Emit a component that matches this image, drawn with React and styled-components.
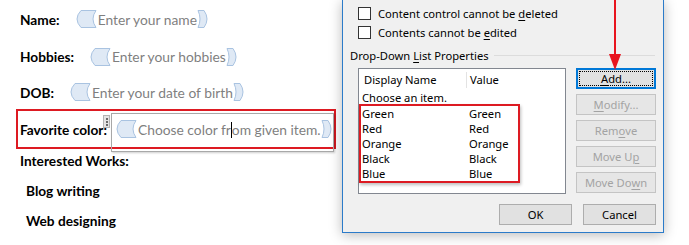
import React from 'react'
import styled, { createGlobalStyle } from 'styled-components'

const GlobalStyle = createGlobalStyle`
  html, body { margin: 0; padding: 0; background: #fff; }
  body { width: 689px; height: 245px; overflow: hidden; }
`

const fields = [
    { label: 'Name:', text: 'Enter your name', h: 38 },
    { label: 'Hobbies:', text: 'Enter your hobbies', h: 37 },
    { label: 'DOB:', text: 'Enter your date of birth', h: 34 },
]

const colorsList = ['Green', 'Red', 'Orange', 'Black', 'Blue']

const sideButtons = [
    { pre: '', u: 'A', post: 'dd...', active: true },
    { pre: '', u: 'M', post: 'odify...' },
    { pre: 'Rem', u: 'o', post: 've' },
    { pre: 'Move U', u: 'p', post: '' },
    { pre: 'Move Do', u: 'w', post: 'n' },
]

const StartTab = () => (
    <svg width="22" height="18" viewBox="0 0 22 18">
        <path d="M6 0.5 H21 Q15 9 21 17.5 H6 Q-2 9 6 0.5 Z" fill="#dfe9f5" stroke="#a9c3e1" />
    </svg>
)

const EndTab = () => (
    <svg width="13" height="18" viewBox="0 0 13 18">
        <path d="M1 0.5 H7 Q13 9 7 17.5 H1 Q5 9 1 0.5 Z" fill="#dfe9f5" stroke="#a9c3e1" />
    </svg>
)

const Placeholder = ({ children }) => (
    <Control>
        <StartTab />
        <PlaceText>{children}</PlaceText>
        <EndTab />
    </Control>
)

const App = () => {
    return (
        <Page>
            <GlobalStyle />
            <DocPane>
                {fields.map((f, i) => (
                    <FieldRow key={i} $h={f.h}>
                        <Label>{f.label}</Label>
                        <Placeholder>{f.text}</Placeholder>
                    </FieldRow>
                ))}
                <FavRow>
                    <Label>Favorite color:</Label>
                    <ControlBox>
                        <Grip><i /><i /><i /></Grip>
                        <Control>
                            <StartTab />
                            <PlaceText>Choose color fr<Caret />om given item.</PlaceText>
                            <EndTab />
                        </Control>
                    </ControlBox>
                </FavRow>
                <FieldRow $h={22}><Label>Interested Works:</Label></FieldRow>
                <FieldRow $h={30} $indent={10} $top={4}><Label>Blog writing</Label></FieldRow>
                <FieldRow $h={30} $indent={10}><Label>Web designing</Label></FieldRow>
            </DocPane>

            <Dialog>
                <CheckRow>
                    <Box />
                    <span>Content control cannot be <U>d</U>eleted</span>
                </CheckRow>
                <CheckRow>
                    <Box />
                    <span>Contents cannot be <U>e</U>dited</span>
                </CheckRow>
                <Section>
                    <span>Drop-Down <U>L</U>ist Properties</span>
                    <Rule />
                </Section>
                <ListArea>
                    <ListBox>
                        <ListHead>
                            <HeadCell $sep>Display Name</HeadCell>
                            <HeadCell>Value</HeadCell>
                        </ListHead>
                        <ListRow $pad={3}><span>Choose an item.</span><span></span></ListRow>
                        <Highlight>
                            {colorsList.map((c) => (
                                <ListRow key={c} $pad={1}><span>{c}</span><span>{c}</span></ListRow>
                            ))}
                        </Highlight>
                    </ListBox>
                    <SideButtons>
                        {sideButtons.map((b, i) => (
                            <Btn key={i} $active={b.active} $disabled={!b.active}>
                                <BtnInner $focus={b.active}>{b.pre}<U>{b.u}</U>{b.post}</BtnInner>
                            </Btn>
                        ))}
                    </SideButtons>
                </ListArea>
                <Footer>
                    <Btn $w={73}><BtnInner>OK</BtnInner></Btn>
                    <Btn $w={73}><BtnInner>Cancel</BtnInner></Btn>
                </Footer>
            </Dialog>
            <Filler />

            <Arrow width="12" height="71" viewBox="0 0 12 71">
                <rect x="5" y="0" width="2" height="56" fill="#e8141e" />
                <polygon points="0,54 12,54 6,70" fill="#e8141e" />
            </Arrow>
        </Page>
    )
}

const Page = styled.div`
position: relative;
display: flex;
height: 245px;
overflow: hidden;
`

const DocPane = styled.div`
width: 342px;
flex-shrink: 0;
padding-left: 16px;
box-sizing: border-box;
font-family: Lato, "Liberation Sans", sans-serif;
font-size: 13.7px;
color: #000;
`

const FieldRow = styled.div`
display: flex;
align-items: center;
gap: 15px;
height: ${({ $h }) => $h}px;
padding-left: ${({ $indent }) => $indent || 4}px;
margin-top: ${({ $top }) => $top || 0}px;
`

const Label = styled.span`
font-weight: 700;
white-space: nowrap;
flex-shrink: 0;
`

const Control = styled.span`
display: inline-flex;
align-items: center;
svg { display: block; flex-shrink: 0; }
`

const PlaceText = styled.span`
color: #7f7f7f;
font-size: 13.8px;
white-space: nowrap;
margin: 0 0 0 1px;
`

const Caret = styled.i`
display: inline-block;
width: 1px;
height: 16px;
background: #000;
vertical-align: -3px;
`

const FavRow = styled.div`
display: flex;
align-items: flex-start;
width: 320px;
height: 40px;
box-sizing: border-box;
border: 2px solid #dd1a22;
padding-left: 2px;
> span:first-child { margin-top: 10px; }
`

const ControlBox = styled.div`
position: relative;
width: 223px;
height: 39px;
margin-left: auto;
margin-top: 2px;
flex-shrink: 0;
box-sizing: border-box;
border: 1px solid #a8a8a8;
box-shadow: 1px 1px 2px rgba(0,0,0,0.2);
padding: 6px 0 0 3px;
`

const Grip = styled.div`
position: absolute;
left: -9px;
top: 1px;
width: 7px;
height: 13px;
box-sizing: border-box;
background: #e4e4e4;
border: 1px solid #b4b4b4;
display: flex;
flex-direction: column;
align-items: center;
justify-content: center;
gap: 1px;
i { width: 2px; height: 2px; background: #6a6a6a; }
`

const Dialog = styled.div`
width: 322px;
height: 233px;
flex-shrink: 0;
box-sizing: border-box;
background: #f0f0f0;
border: 1px solid #2b7bc9;
border-top: none;
box-shadow: 0 2px 12px rgba(0,0,0,0.28);
padding: 4px 7px 0 15px;
font-family: "Noto Sans", "Open Sans", sans-serif;
font-size: 11.2px;
color: #000;
display: flex;
flex-direction: column;
z-index: 1;
`

const CheckRow = styled.div`
display: flex;
align-items: center;
gap: 7px;
height: 19px;
`

const Box = styled.span`
width: 13px;
height: 13px;
box-sizing: border-box;
border: 1px solid #333;
background: #fff;
`

const U = styled.u`
text-decoration: underline;
text-underline-offset: 2px;
`

const Section = styled.div`
display: flex;
align-items: center;
gap: 5px;
height: 26px;
margin-left: -8px;
margin-right: 1px;
`

const Rule = styled.span`
flex: 1;
height: 1px;
background: #dcdcdc;
`

const ListArea = styled.div`
display: flex;
gap: 10px;
`

const ListBox = styled.div`
width: 208px;
height: 126px;
box-sizing: border-box;
background: #fff;
border: 1px solid #828790;
`

const ListHead = styled.div`
display: grid;
grid-template-columns: 108px 1fr;
height: 21px;
align-items: center;
`

const HeadCell = styled.span`
padding-left: ${({ $sep }) => ($sep ? 5 : 3)}px;
height: 16px;
line-height: 16px;
border-right: ${({ $sep }) => ($sep ? '1px solid #e3e3e3' : 'none')};
`

const ListRow = styled.div`
display: grid;
grid-template-columns: ${({ $pad }) => 108 - $pad}px 1fr;
padding-left: ${({ $pad }) => $pad}px;
height: 15px;
line-height: 15px;
`

const Highlight = styled.div`
width: 161px;
margin-top: -1px;
box-sizing: border-box;
border: 2px solid #dd1a22;
box-shadow: 1px 2px 3px rgba(0,0,0,0.25);
`

const SideButtons = styled.div`
display: flex;
flex-direction: column;
gap: 5px;
`

const Btn = styled.div`
width: ${({ $w }) => $w || 80}px;
height: 21px;
box-sizing: border-box;
background: ${({ $disabled }) => ($disabled ? '#e6e6e6' : '#e1e1e1')};
border: ${({ $active, $disabled }) => ($active ? '2px solid #0078d7' : $disabled ? '1px solid #c4c4c4' : '1px solid #adadad')};
color: ${({ $disabled }) => ($disabled ? '#a3a3a3' : '#000')};
display: flex;
padding: 1px;
`

const BtnInner = styled.span`
flex: 1;
display: flex;
align-items: center;
justify-content: center;
outline: ${({ $focus }) => ($focus ? '1px dotted #000' : 'none')};
outline-offset: -1px;
white-space: nowrap;
`

const Footer = styled.div`
display: flex;
justify-content: flex-end;
gap: 11px;
margin-top: 10px;
`

const Filler = styled.div`
flex: 1;
`

const Arrow = styled.svg`
position: absolute;
left: 609px;
top: 0;
z-index: 2;
`

export default App
